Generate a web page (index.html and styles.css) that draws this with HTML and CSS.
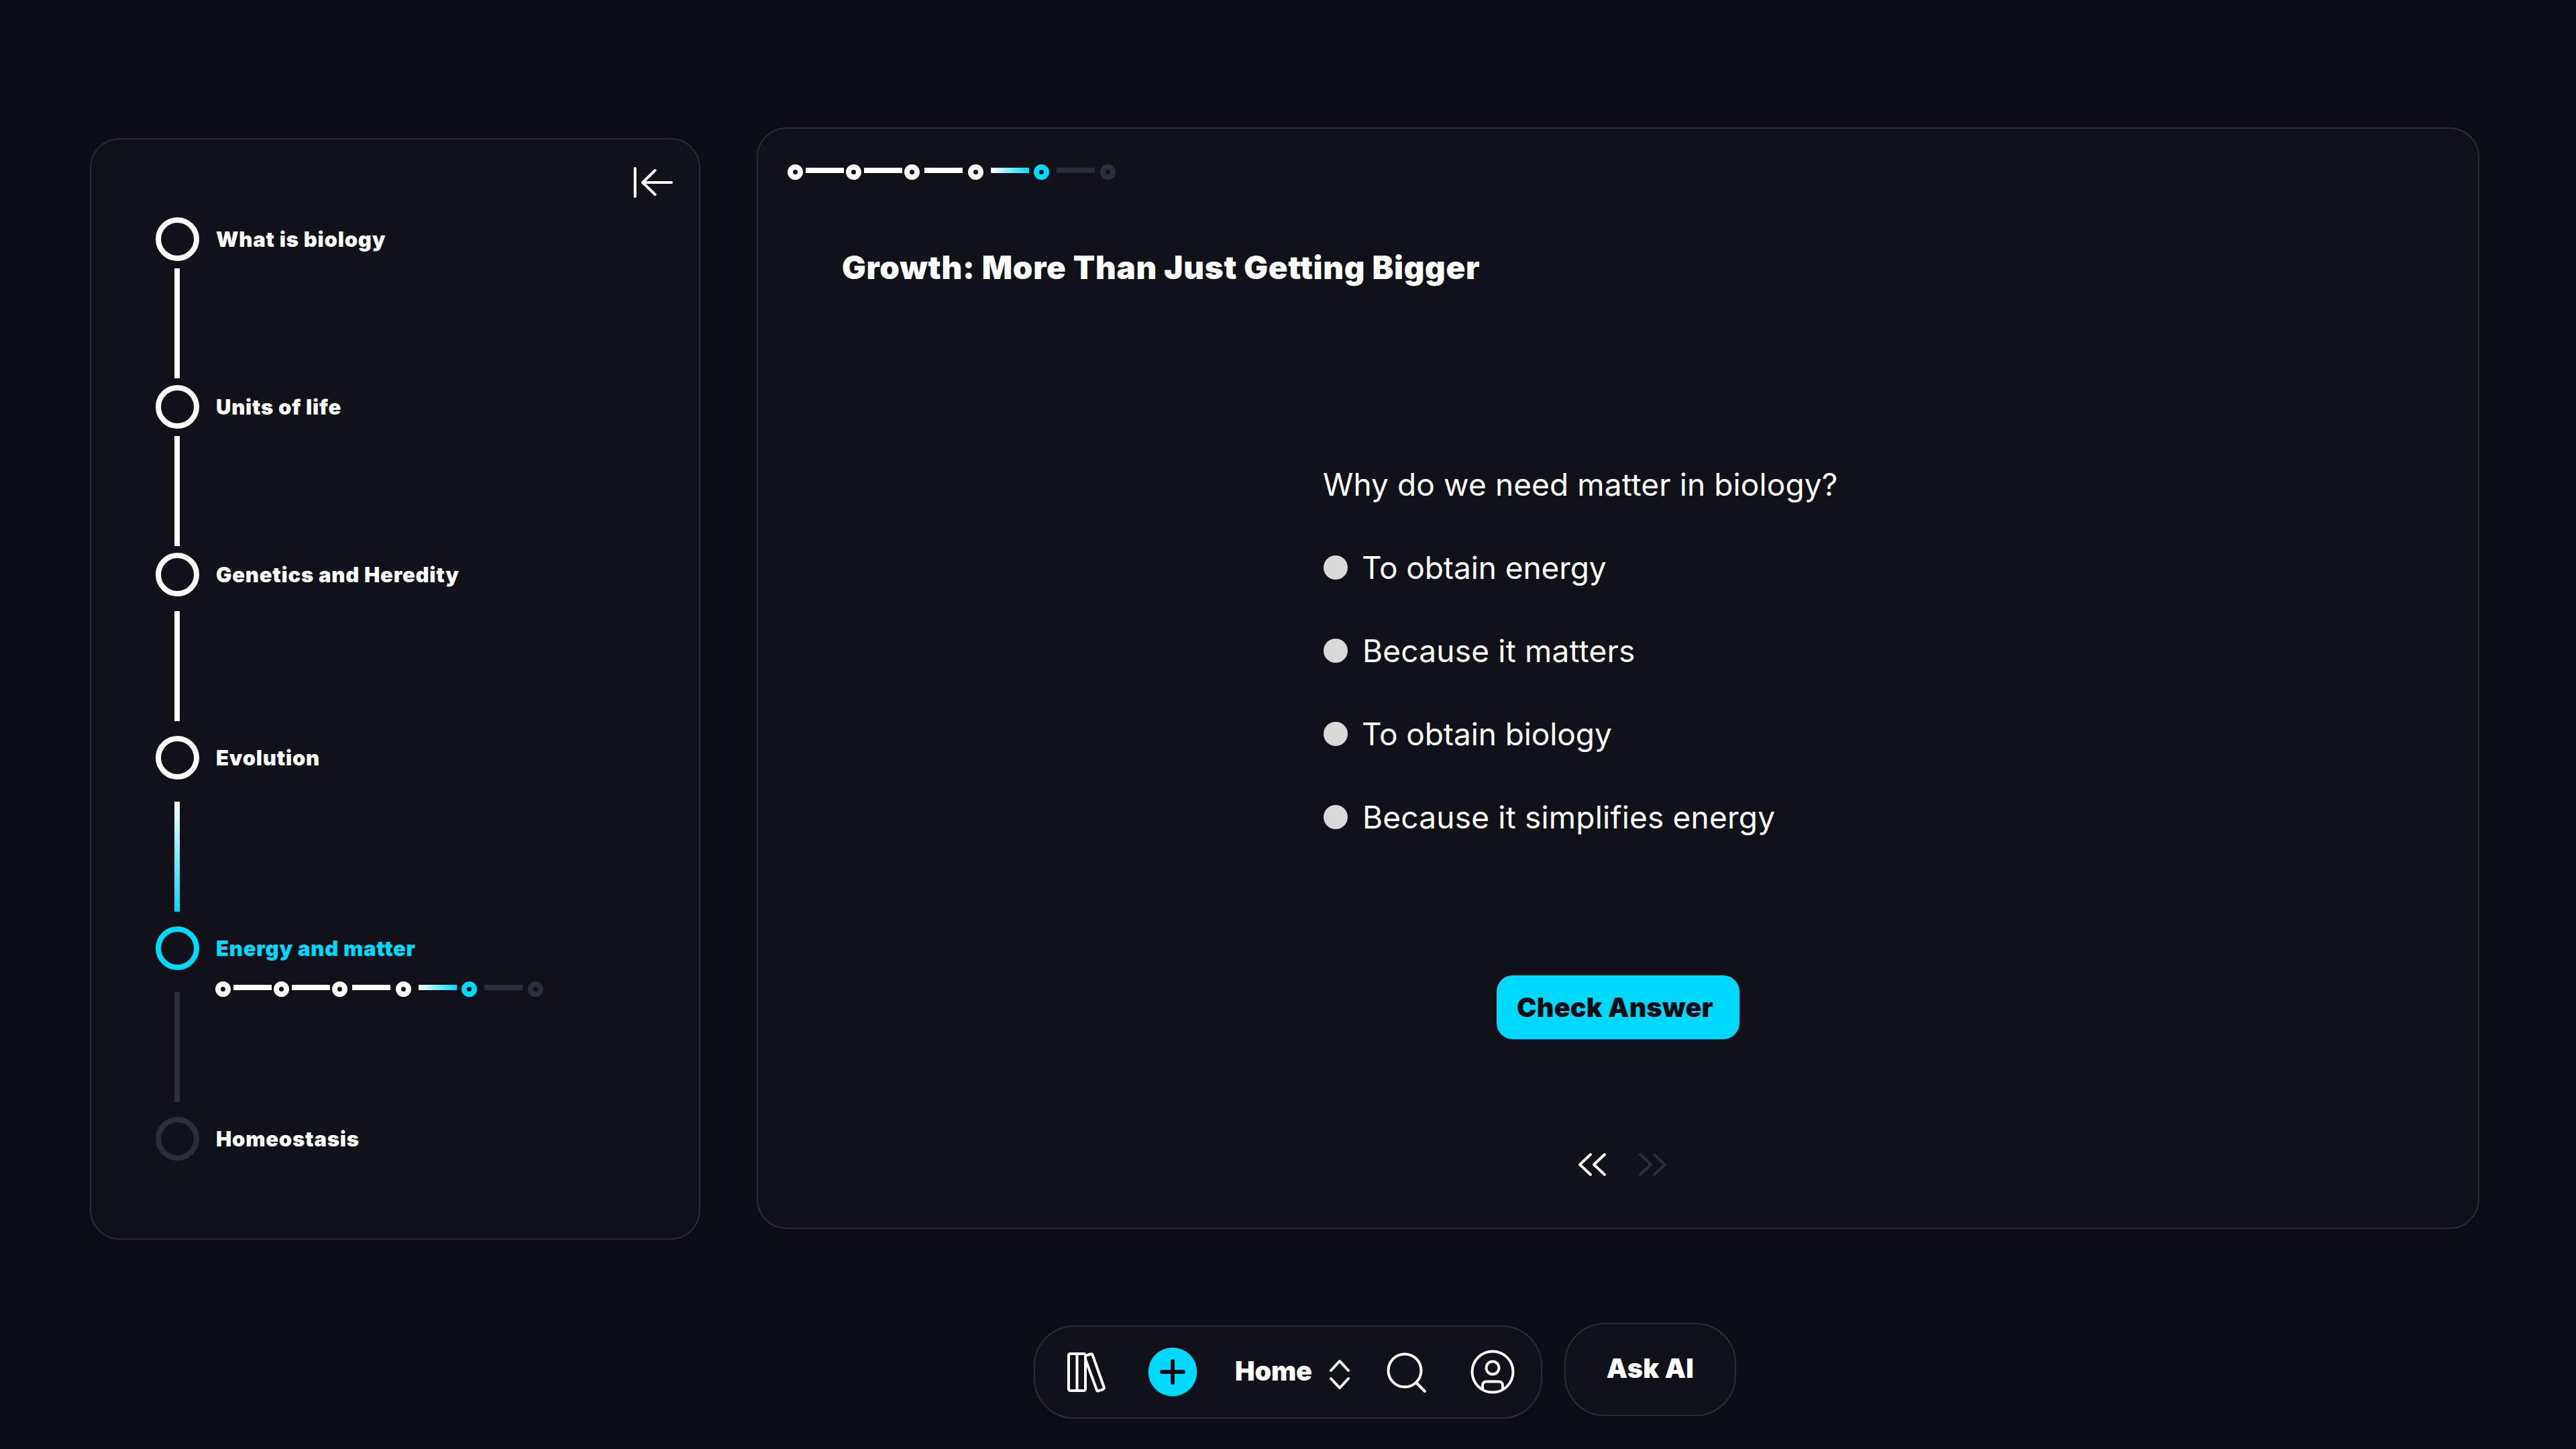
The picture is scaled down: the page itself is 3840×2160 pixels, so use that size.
FILE: index.html
```html
<!DOCTYPE html>
<html lang="en">

<head>
  <meta charset="UTF-8" />
  <meta name="viewport" content="width=device-width, initial-scale=1.0" />
  <title>Biology</title>
  <link rel="stylesheet" href="styles.css">
</head>

<body>
  <main class="content">
    <aside class="sidebar">
      <button class="collapse">
        <svg width="60" height="50" viewBox="0 0 60 50">
          <path d="M3.7 4v42M58 25H15M33.500 7L15 25l18.500 18" />
        </svg>
      </button>
      <ul class="topics">
        <li class="topic">
          <i class="ring"></i>
          <span class="label">What is biology</span>
        </li>
        <li class="line"></li>
        <li class="topic">
          <i class="ring"></i>
          <span class="label">Units of life</span>
        </li>
        <li class="line"></li>
        <li class="topic">
          <i class="ring"></i>
          <span class="label">Genetics and Heredity</span>
        </li>
        <li class="line line-mid"></li>
        <li class="topic">
          <i class="ring"></i>
          <span class="label">Evolution</span>
        </li>
        <li class="line line-low line-fade"></li>
        <li class="topic current">
          <i class="ring"></i>
          <span class="label">Energy and matter</span>
        </li>
        <li class="sub">
          <div class="line line-low line-off"></div>
          <div class="steps">
            <i class="dot"></i><i class="bar"></i>
            <i class="dot"></i><i class="bar"></i>
            <i class="dot"></i><i class="bar bar-wide"></i>
            <i class="dot"></i><i class="bar bar-far bar-fade"></i>
            <i class="dot dot-on"></i><i class="bar bar-far bar-off"></i>
            <i class="dot dot-off"></i>
          </div>
        </li>
        <li class="topic off">
          <i class="ring"></i>
          <span class="label">Homeostasis</span>
        </li>
      </ul>
    </aside>

    <section class="lesson">
      <div class="steps">
        <i class="dot"></i><i class="bar"></i>
        <i class="dot"></i><i class="bar"></i>
        <i class="dot"></i><i class="bar bar-wide"></i>
        <i class="dot"></i><i class="bar bar-far bar-fade"></i>
        <i class="dot dot-on"></i><i class="bar bar-far bar-off"></i>
        <i class="dot dot-off"></i>
      </div>
      <h1 class="title">Growth: More Than Just Getting Bigger</h1>
      <div class="quiz">
        <p class="question">Why do we need matter in biology?</p>
        <div class="option tight"><i class="radio"></i><span>To obtain energy</span></div>
        <div class="option"><i class="radio"></i><span>Because it matters</span></div>
        <div class="option tight"><i class="radio"></i><span>To obtain biology</span></div>
        <div class="option"><i class="radio"></i><span>Because it simplifies energy</span></div>
      </div>
      <button class="check">Check Answer</button>
      <div class="pager">
        <svg width="44" height="40" viewBox="0 0 44 40">
          <path d="M20 5L4 20l16 15M41 5L25 20l16 15" />
        </svg>
        <svg class="next" width="44" height="40" viewBox="0 0 44 40">
          <path d="M3 5l16 15L3 35M24 5l16 15-16 15" />
        </svg>
      </div>
    </section>
  </main>

  <footer class="bottom">
    <nav class="dock">
      <svg class="books" width="60" height="64" viewBox="0 0 60 64">
        <rect x="3" y="5" width="25" height="55" rx="2.500" />
        <path d="M15.500 5v55M28.500 8l7-2.500q2.500-.8 3.200 1.500l17 48q.8 2.200-1.500 3.200l-6 2q-2.500.8-3.400-1.500L28 13" />
      </svg>
      <svg class="plus" width="74" height="74" viewBox="0 0 74 74">
        <circle cx="37" cy="37" r="36.300" />
        <path d="M37 21v32M21 37h32" />
      </svg>
      <span class="home">Home</span>
      <svg class="updown" width="34" height="48" viewBox="0 0 34 48">
        <path d="M4 19L17 5l13 14M4 31l13 14 13-14" />
      </svg>
      <svg class="search" width="64" height="64" viewBox="0 0 64 64">
        <circle cx="29" cy="30" r="24.500" />
        <path d="M46 48l13 13" />
      </svg>
      <svg class="user" width="68" height="68" viewBox="0 0 68 68">
        <circle cx="34" cy="34" r="30.500" />
        <circle cx="34" cy="28" r="9.500" />
        <path d="M19 59v-4.500q0-6 6-6h18q6 0 6 6V59" />
      </svg>
    </nav>
    <button class="ask">Ask AI</button>
  </footer>
</body>

</html>
```
FILE: styles.css
```css
* {
  box-sizing: border-box;
}

body {
  margin: 0;
  width: 3840px;
  height: 2160px;
  overflow: hidden;
  background: #0c0d15;
  color: #fff;
  font-family: Inter, "Liberation Sans", sans-serif;
}

button {
  padding: 0;
  border: 0;
  background: none;
  color: inherit;
  font: inherit;
}

svg {
  display: block;
  flex: none;
  fill: none;
  stroke: #fff;
  stroke-width: 4;
  stroke-linecap: round;
  stroke-linejoin: round;
}

.content {
  display: flex;
  align-items: flex-start;
  gap: 84px;
  height: 1972px;
  padding: 190px 0 0 134px;
}

.sidebar,
.lesson,
.dock,
.ask {
  border: 2px solid #2a2d3d;
  background: #111219;
}

/* sidebar */
.sidebar {
  width: 910px;
  height: 1642px;
  margin-top: 16px;
  border-radius: 44px;
}

.collapse {
  display: block;
  margin: 39px 0 0 807px;
}

.topics {
  margin: 27px 0 0 96px;
  padding: 0;
  list-style: none;
}

.topic {
  display: flex;
  align-items: center;
  gap: 25px;
  height: 65px;
}

.ring {
  width: 65px;
  height: 65px;
  border: 8px solid #fff;
  border-radius: 50%;
}

.label {
  font-size: 31px;
  font-weight: 900;
  letter-spacing: .8px;
  line-height: 40px;
  white-space: nowrap;
}

.line {
  width: 8px;
  height: 164px;
  margin: 11px 0 10px 28px;
  background: #fff;
}

.line-mid {
  margin: 22px 0 22px 28px;
}

.line-low {
  margin: 33px 0 22px 28px;
}

.line-fade {
  background: linear-gradient(#fff, #00d9ff);
}

.line-off {
  background: #2a2d3d;
}

.current {
  color: #00d9ff;
}

.current .ring {
  border-color: #00d9ff;
}

.off .ring {
  border-color: #2a2d3d;
}

.sub {
  display: flex;
  align-items: flex-start;
}

.sub .steps {
  margin: 17px 0 0 53px;
}

/* progress steps */
.steps {
  display: flex;
  align-items: center;
  height: 23px;
}

.dot {
  width: 23px;
  height: 23px;
  border: 8px solid #fff;
  border-radius: 50%;
}

.bar {
  width: 57px;
  height: 8px;
  margin: 0 3.5px 5px;
  background: #fff;
}

.bar-wide {
  margin: 0 7.3px 5px;
}

.bar-far {
  margin: 0 7.2px 5px 11.300px;
}

.bar-fade {
  background: linear-gradient(to right, #fff, #00d9ff);
}

.bar-off {
  background: #2a2d3d;
}

.dot-on {
  border-color: #00d9ff;
}

.dot-off {
  border-color: #2a2d3d;
}

/* lesson */
.lesson {
  display: flex;
  flex-direction: column;
  width: 2568px;
  height: 1642px;
  padding: 53px 0 0 44px;
  border-radius: 44px;
}

.title {
  margin: 101px 0 0 81px;
  font-size: 47.500px;
  font-weight: 900;
  letter-spacing: .7px;
  line-height: 60px;
  white-space: nowrap;
}

.quiz {
  margin: 231px 0 0 799px;
  font-size: 46px;
}

.question,
.option {
  height: 124px;
  margin: 0;
  line-height: 124px;
  letter-spacing: .2px;
  white-space: nowrap;
}

.question {
  margin-left: -1px;
  letter-spacing: .1px;
}

.option {
  display: flex;
  align-items: center;
  gap: 22px;
}

.tight {
  gap: 21px;
  letter-spacing: -.1px;
}

.radio {
  width: 36px;
  height: 36px;
  border-radius: 50%;
  background: #d9d9d9;
}

.check {
  width: 362px;
  height: 95px;
  margin: 174px 0 0 1057px;
  padding-right: 9px;
  border-radius: 24px;
  background: #00d9ff;
  color: #0c0d15;
  font-size: 39.500px;
  font-weight: 900;
  letter-spacing: .2px;
}

.pager {
  display: flex;
  gap: 47px;
  margin: 167px 0 0 1177px;
}

.next {
  stroke: #2a2d3d;
}

/* bottom bar */
.bottom {
  display: flex;
  align-items: flex-start;
  gap: 33px;
  padding-left: 1541px;
}

.dock {
  display: flex;
  align-items: center;
  width: 758px;
  height: 139px;
  margin-top: 4px;
  padding: 0 0 2px 47px;
  border-radius: 60px;
}

.plus {
  margin-left: 61px;
  stroke: #0c0d15;
  stroke-width: 6;
}

.plus circle {
  fill: #00d9ff;
  stroke: none;
}

.home {
  width: 118px;
  margin-left: 56px;
  padding-bottom: 2px;
  font-size: 39.500px;
  font-weight: 900;
  letter-spacing: -.2px;
}

.updown {
  margin: 6px 0 0 21px;
}

.search {
  margin-left: 51px;
}

.user {
  margin-left: 62px;
}

.ask {
  width: 256px;
  height: 139px;
  padding-bottom: 3px;
  border-radius: 60px;
  font-size: 39.500px;
  font-weight: 900;
  letter-spacing: .3px;
}
```
